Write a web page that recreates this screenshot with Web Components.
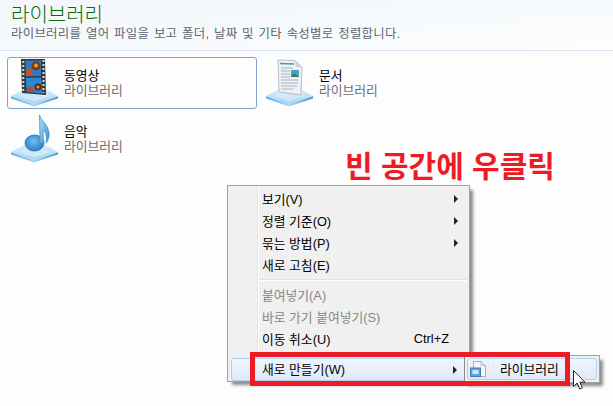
<!DOCTYPE html>
<html lang="ko"><head><meta charset="utf-8"><title>라이브러리</title>
<style>
html,body{margin:0;padding:0}
body{width:613px;height:406px;overflow:hidden;position:relative;background:#fdfdfe;font-family:"Liberation Sans","Noto Sans CJK KR",sans-serif;font-size:12.8px}
svg{display:block}
</style></head><body>
<svg width="0" height="0" style="position:absolute">
<defs>
<linearGradient id="pa" x1="0" y1="0" x2="0" y2="1"><stop offset="0" stop-color="#e4f2fb"/><stop offset="1" stop-color="#a5d4f0"/></linearGradient>
<linearGradient id="pb" x1="0" y1="0" x2="1" y2="0"><stop offset="0" stop-color="#5fb0e6"/><stop offset=".5" stop-color="#a4d8f6"/><stop offset="1" stop-color="#4a9ad6"/></linearGradient>
<linearGradient id="nt" x1="0" y1="0" x2="1" y2="1"><stop offset="0" stop-color="#b8e2f8"/><stop offset="1" stop-color="#3a90d2"/></linearGradient>
<radialGradient id="nh" cx=".45" cy=".4" r=".7"><stop offset="0" stop-color="#6cc0f2"/><stop offset="1" stop-color="#1f74bb"/></radialGradient>
<symbol id="plate" viewBox="0 0 48 48">
<path d="M1 37 L24 45 L48 37 L48 39.500 L24 47.500 L1 39.500Z" fill="url(#pb)"/>
<path d="M1 37 L19 27.500 L31 27.500 L48 37 L24 45Z" fill="url(#pa)"/>
<path d="M9 37 L22 30.500 L28 30.500 L40 37 L24 42.500Z" fill="#d4eaf8" opacity=".8"/>
</symbol>
</defs></svg>

<template id="t-head"><style>
:host{display:block;height:50px;border-bottom:1px solid #d6e5f1;background:linear-gradient(175deg,#f3f6fa 0,#f7fafc 55%,#fdfdfe 100%);padding:0 0 0 11px;box-sizing:content-box}
h1{margin:0;font:300 20px/24px "Liberation Sans","Noto Sans CJK KR",sans-serif;padding-top:3px;color:#066a0a}
p{margin:0;font:400 12.4px/15px "Liberation Sans","Noto Sans CJK KR",sans-serif;color:#5c6670;white-space:nowrap;letter-spacing:.3px;word-spacing:1px}
</style><h1><slot name="title"></slot></h1><p><slot name="sub"></slot></p></template>

<template id="t-grid"><style>
:host{display:grid;grid-template-columns:250px 250px;column-gap:5px;grid-auto-rows:52px;row-gap:4px;padding:6px 0 0 7px}
</style><slot></slot></template>

<template id="t-item"><style>
:host{display:flex;box-sizing:border-box;height:52px;border:1px solid transparent;border-radius:3px;align-items:center;padding-left:2px}
:host([selected]){border-color:#7da2ce;background:#fdfdfe}
.ic{width:48px;height:48px;flex:none;margin-right:6px}
.t{display:flex;flex-direction:column;line-height:15px;font-size:12.8px;margin-top:-1px}
.n{color:#000}.s{color:#6d6d6d}
</style><div class="ic"><slot name="icon"></slot></div><div class="t"><span class="n"><slot></slot></span><span class="s"><slot name="sub"></slot></span></div></template>

<template id="t-menu"><style>
:host{display:block;position:absolute;box-sizing:border-box;background:#f0f0f0;border:1px solid #a0a0a0;box-shadow:4px 4px 3px -1px rgba(0,0,0,.45)}
.g{position:absolute;left:29px;top:0;bottom:0;width:2px;background:linear-gradient(90deg,#e2e3e3 50%,#fff 50%)}
.w{position:relative;padding:2px}
</style><div class="g"></div><div class="w"><slot></slot></div></template>

<template id="t-mi"><style>
:host{display:grid;grid-template-columns:1fr auto 22px;align-items:center;height:22px;padding-left:32px;box-sizing:border-box;color:#000;font-size:12.8px;white-space:nowrap}
:host([disabled]){color:#868686}
:host([hot]){height:23px;margin-left:1px;border:1px solid #aed0f4;border-radius:3px;background:linear-gradient(#f0f5fc,#dfe9f7);padding-left:30px}
.x{padding-bottom:2px}
.a{width:0;height:0;border-left:4px solid #222;border-top:4px solid transparent;border-bottom:4px solid transparent;justify-self:center;margin-left:-1px;visibility:hidden}
:host([sub]) .a{visibility:visible}
.k{margin-right:-4px;padding-bottom:2px}
</style><span class="x"><slot></slot></span><span class="k"><slot name="key"></slot></span><span class="a"></span></template>

<template id="t-sep"><style>
:host{display:block;height:2px;margin:3px 0 3px 30px;background:linear-gradient(#e1e1e1 50%,#fff 50%)}
</style></template>

<template id="t-sub"><style>
:host{display:block;position:absolute;box-sizing:border-box;background:#f0f0f0;border:1px solid #a0a0a0;border-left-color:#8a8a8a;box-shadow:4px 4px 3px -1px rgba(0,0,0,.45);padding:2px}
.i{display:flex;align-items:center;height:100%;box-sizing:border-box;border:1px solid #aed0f4;border-radius:3px;background:linear-gradient(#f0f5fc,#dfe9f7);font-size:12.8px;color:#000}
.ic{width:23px;padding-left:2px;display:flex;justify-content:flex-start;border-right:1px solid #e2ebf6;align-self:stretch;align-items:center;margin-right:6px}
.x{padding-bottom:2px}
</style><div class="i"><div class="ic"><slot name="icon"></slot></div><span class="x"><slot></slot></span></div></template>

<template id="t-note"><style>
:host{display:block;position:absolute;color:#ed1c24;font:700 30px/36px "Liberation Sans","Noto Sans CJK KR",sans-serif;white-space:nowrap}
</style><slot></slot></template>

<template id="t-frame"><style>
:host{display:block;position:absolute;box-sizing:border-box;border:5px solid #ed1c24}
</style></template>

<lib-head>
<span slot="title">라이브러리</span>
<span slot="sub">라이브러리를 열어 파일을 보고 폴더, 날짜 및 기타 속성별로 정렬합니다.</span>
</lib-head>
<lib-grid>
<lib-item selected>
<svg slot="icon" width="48" height="48" viewBox="0 0 48 48"><use href="#plate" width="48" height="48"/>
<path d="M11 0 L35 0 L36 36 L12 34Z" fill="#2c3b3a"/>
<path d="M15.500 1.500 L31 1.500 L31 17 L15.800 17.500Z" fill="#2a7ad0"/>
<path d="M15.900 19 L31.200 18.500 L32 34.500 L16.500 33Z" fill="#2b86d8"/>
<circle cx="26" cy="7" r="4.500" fill="#7a3a1a"/><circle cx="26" cy="6.500" r="2" fill="#e8a020"/>
<path d="M16 17 L16 12 L20 8 L24 17Z" fill="#c85030"/>
<circle cx="28" cy="28" r="3.500" fill="#5a2a10"/><circle cx="28" cy="28" r="1.500" fill="#e8a020"/>
<path d="M17 33 L17 29 L22 27 L25 33Z" fill="#b84a30"/>
<path d="M13.300 2v31M33.500 1v33" stroke="#d5dcdc" stroke-width="2" stroke-dasharray="2 2" fill="none"/>
</svg>동영상<span slot="sub">라이브러리</span></lib-item>
<lib-item>
<svg slot="icon" width="48" height="48" viewBox="0 0 48 48"><use href="#plate" width="48" height="48"/>
<path d="M13 1 L30 1.500 L37 8 L36 36 L14 33Z" fill="#eef0f6" stroke="#a8b0b8" stroke-width=".8"/>
<path d="M30 1.500 L30.500 8 L37 8Z" fill="#cdd3da"/>
<path d="M15 4.500 L29 5" stroke="#3f9fa8" stroke-width="1.500"/>
<path d="M16 9h12M16 12h9M16 15h9M16 18h9M16 21h17M16 24h17M16 27h16M16 30h12" stroke="#98a4b4" stroke-width=".8"/>
<rect x="26" y="11" width="8" height="7" fill="#4aa0c8"/><path d="M26 18 L29 14 L34 18Z" fill="#3a7a60"/>
</svg>문서<span slot="sub">라이브러리</span></lib-item>
<lib-item>
<svg slot="icon" width="48" height="48" viewBox="0 0 48 48"><use href="#plate" width="48" height="48"/>
<ellipse cx="24.500" cy="28" rx="9.500" ry="8" fill="url(#nh)" stroke="#2a6fa8" stroke-width=".8"/>
<path d="M30 28 L29.500 0 C31 6 38 9 39 18 C39.500 22 38 26 36 28 C37 22 36 17 33 15 L33.500 28Z" fill="url(#nt)" stroke="#3a88c4" stroke-width=".7"/>
</svg>음악<span slot="sub">라이브러리</span></lib-item>
</lib-grid>

<ctx-menu style="left:227px;top:185px;width:243px;height:197px">
<menu-row sub>보기(V)</menu-row>
<menu-row sub>정렬 기준(O)</menu-row>
<menu-row sub>묶는 방법(P)</menu-row>
<menu-row>새로 고침(E)</menu-row>
<menu-sep></menu-sep>
<menu-row disabled>붙여넣기(A)</menu-row>
<menu-row disabled>바로 가기 붙여넣기(S)</menu-row>
<menu-row>이동 취소(U)<span slot="key">Ctrl+Z</span></menu-row>
<menu-row hot sub style="margin-top:8px">새로 만들기(W)</menu-row>
</ctx-menu>
<sub-menu style="left:464px;top:355px;width:136px;height:28px">
<svg slot="icon" width="16" height="16" viewBox="0 0 16 16"><path d="M3.500 .5H11L15.500 4.500V15.500H3.500Z" fill="#f4f6f9" stroke="#a9b1bb"/><path d="M11 .5V4.500H15.500" fill="#dfe3e8" stroke="#a9b1bb" stroke-width=".8"/><rect x=".5" y="7" width="10" height="8.500" fill="#5aa6de" stroke="#3f7fb0"/><rect x="2.500" y="9" width="6" height="4" fill="#cfe7f8"/></svg>
라이브러리</sub-menu>
<red-frame style="left:250px;top:352px;width:320px;height:34px"></red-frame>
<svg style="position:absolute;left:573px;top:370px" width="13" height="21" viewBox="0 0 13 21"><path d="M.5.500V16.500L4.200 13 6.700 19 9.400 17.800 6.900 12.200H12Z" fill="#fff" stroke="#222" stroke-width="1" stroke-linejoin="round"/></svg>
<red-note style="left:345px;top:149px">빈 공간에 우클릭</red-note>

<script>
const def=(n,t)=>customElements.define(n,class extends HTMLElement{constructor(){super();this.attachShadow({mode:'open'}).appendChild(document.getElementById(t).content.cloneNode(true));}});
[['lib-head','t-head'],['lib-grid','t-grid'],['lib-item','t-item'],['ctx-menu','t-menu'],['menu-row','t-mi'],['menu-sep','t-sep'],['sub-menu','t-sub'],['red-note','t-note'],['red-frame','t-frame']].forEach(a=>def(a[0],a[1]));
</script>
</body></html>
